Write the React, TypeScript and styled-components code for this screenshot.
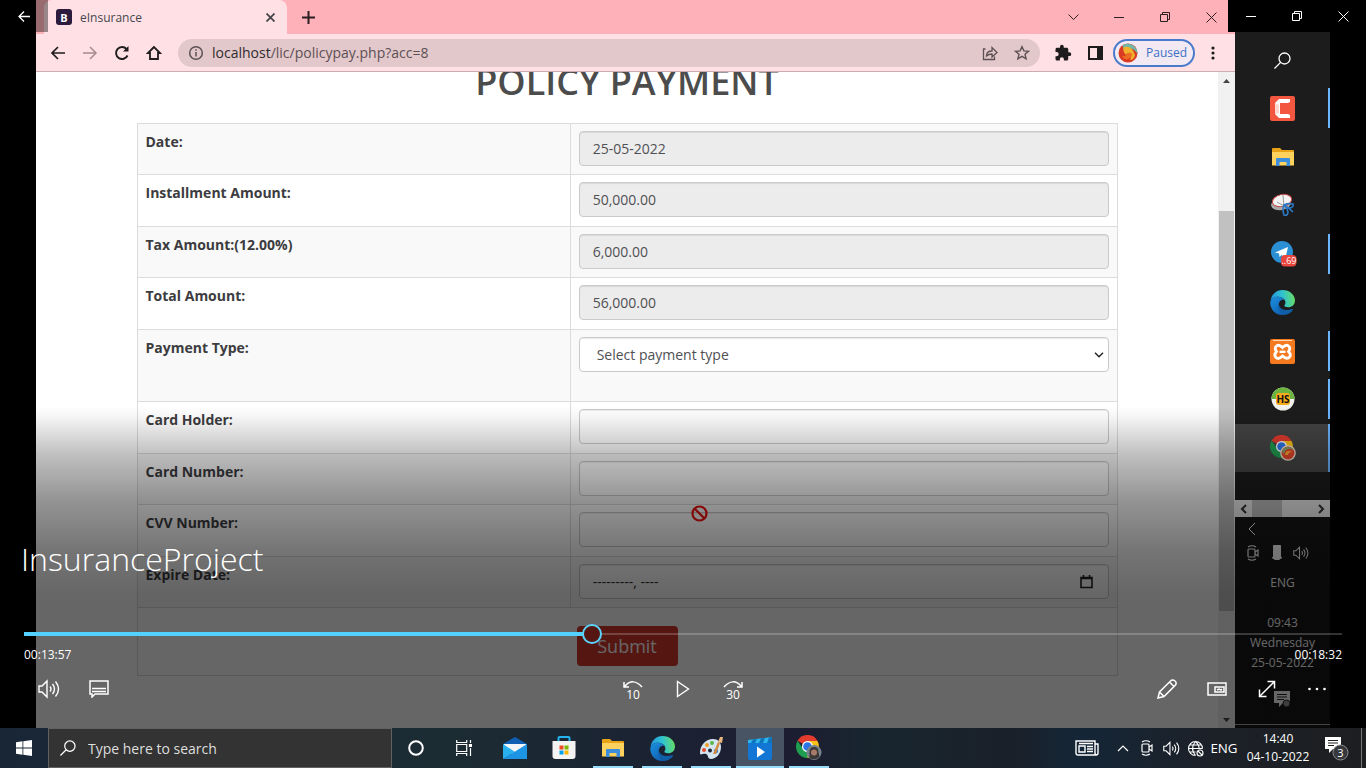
import React from "react";
import styled, { createGlobalStyle, css } from "styled-components";
import { MdExtension } from "react-icons/md";

const uiFont = `"Open Sans", "Noto Sans", sans-serif`;

const GlobalStyle = createGlobalStyle`
  * { box-sizing: border-box; }
  body { margin: 0; background: #000; font-family: ${uiFont}; }
  button, input, select { font-family: inherit; }
  button { border: 0; padding: 0; background: none; color: inherit; }
  svg { display: block; flex: none; }
`;

const Screen = styled.div`
  display: flex;
  flex-direction: column;
  min-height: 100vh;
  background: #000;
`;

const Player = styled.main`
  position: relative;
  flex: 1;
  display: flex;
  padding: 0 36px;
  overflow: hidden;
`;

/* ---------- recorded browser window ---------- */

const Browser = styled.section`
  flex: 1;
  min-width: 0;
  display: flex;
  flex-direction: column;
  background: #fff;
`;

const TabStrip = styled.div`
  display: flex;
  align-items: center;
  height: 34px;
  padding-right: 1px;
  background: #ffb1b9;
  color: #2c1f21;
`;

const Tab = styled.div`
  display: flex;
  align-items: center;
  gap: 8px;
  align-self: stretch;
  width: 243px;
  margin-left: 8px;
  padding: 0 12px;
  border-radius: 8px 8px 0 0;
  background: #ffe1e5;
  color: #45464c;
  font-size: 12px;
`;

const TabTitle = styled.span`
  flex: 1;
`;

const Favicon = styled.span`
  display: grid;
  place-items: center;
  width: 16px;
  height: 16px;
  border-radius: 3px;
  background: #2d1b3d;
  color: #fff;
  font-size: 11px;
  font-weight: 700;
`;

const NewTab = styled.button`
  margin-left: 15px;
`;

const WindowButtons = styled.div`
  display: flex;
  margin-left: auto;
`;

const WindowButton = styled.button`
  display: grid;
  place-items: center;
  width: 46px;
  height: 30px;
`;

const Toolbar = styled.div`
  display: flex;
  align-items: center;
  height: 38px;
  padding: 0 20px 0 14px;
  border-bottom: 1px solid #cbaeb1;
  background: #ffe1e5;
  color: #1d1b1c;
`;

const NavButtons = styled.div`
  display: flex;
  gap: 16px;
  margin-right: 16px;
`;

const AddressBar = styled.div`
  flex: 1;
  display: flex;
  align-items: center;
  gap: 8px;
  height: 28px;
  padding: 0 10px;
  border-radius: 14px;
  background: #e3c8cb;
  color: #5d5054;
`;

const AddressText = styled.span`
  flex: 1;
  font-size: 14px;

  b {
    color: #2f2b2e;
    font-weight: 400;
  }
`;

const AddressActions = styled.div`
  display: flex;
  gap: 16px;
`;

const Extensions = styled.div`
  display: flex;
  align-items: center;
  gap: 16px;
  margin-left: 14px;
`;

const ExtensionButtons = styled.div`
  display: flex;
  gap: 16px;
`;

const Profile = styled.button`
  display: flex;
  align-items: center;
  gap: 8px;
  width: 82px;
  height: 28px;
  margin-left: -6px;
  padding-left: 3px;
  border: 2px solid #4a7acb;
  border-radius: 14px;
  background: #f2e9f3;
  color: #3e70c4;
  font-size: 12px;
`;

const Viewport = styled.div`
  flex: 1;
  display: flex;
  overflow: hidden;
`;

const Page = styled.div`
  flex: 1;
  position: relative;
  padding: 0 24px;
`;

const Heading = styled.h1`
  margin: 0 0 31px;
  color: #4c4c4c;
  font-size: 36px;
  font-weight: 600;
  line-height: 20px;
  text-align: center;
`;

const PaymentTable = styled.table`
  width: 100%;
  max-width: 981px;
  margin: 0 auto;
  border-collapse: collapse;
  table-layout: fixed;
  border: 1px solid #dcdcdc;
  color: #3c3c40;
  font-size: 14px;
  line-height: 20px;

  tr:nth-child(odd) {
    background: #f9f9f9;
  }
`;

const LabelCol = styled.col`
  width: 44.2%;
`;

const LabelCell = styled.th`
  padding: 8px;
  border: 1px solid #dcdcdc;
  font-weight: 700;
  text-align: left;
  vertical-align: top;
`;

const FieldCell = styled.td<{ $bottom: number }>`
  position: relative;
  padding: 7px 8px ${(p) => p.$bottom}px;
  border: 1px solid #dcdcdc;
`;

const SubmitCell = styled.td`
  padding: 18px 8px 9px;
  text-align: center;
`;

const fieldStyle = css`
  display: block;
  width: 100%;
  height: 35px;
  border: 1px solid #cacaca;
  border-radius: 4px;
  background: #fff;
  box-shadow: inset 0 1px 1px rgba(0, 0, 0, 0.08);
  color: #505054;
  font-size: 14px;
`;

const Field = styled.input`
  ${fieldStyle}
  padding: 0 13px;

  &[readonly] {
    background: #ececec;
  }
  &::placeholder {
    color: #333;
    opacity: 1;
  }
`;

const Select = styled.select`
  ${fieldStyle}
  padding: 0 17px;
  appearance: none;
`;

const FieldIcon = styled.span<{ $right: number }>`
  position: absolute;
  top: 7px;
  right: ${(p) => p.$right}px;
  display: flex;
  align-items: center;
  height: 35px;
  color: #222;
  pointer-events: none;
`;

const BlockedCursor = styled.span`
  position: absolute;
  top: 0;
  left: 120px;
`;

const Submit = styled.button`
  width: 101px;
  height: 40px;
  border-radius: 4px;
  background: #d5382c;
  color: #fff;
  font-size: 18px;
`;

const Scrollbar = styled.div`
  display: flex;
  flex-direction: column;
  width: 17px;
  background: #f1f1f1;
  color: #454545;
`;

const ScrollArrow = styled.span`
  display: grid;
  place-items: center;
  height: 17px;
`;

const ScrollSpace = styled.span<{ $grow: number }>`
  flex: ${(p) => p.$grow};
`;

const ScrollThumb = styled.span`
  flex: 400;
  margin: 0 1px;
  background: #c1c1c1;
`;

/* ---------- recorded vertical taskbar ---------- */

const SideBar = styled.aside`
  display: flex;
  flex-direction: column;
  width: 95px;
  padding-top: 36px;
  background: #1c1c1c;
  color: #fff;
`;

const SideApp = styled.button<{ $bar?: boolean; $active?: boolean }>`
  display: grid;
  place-items: center;
  height: 48px;
  background: linear-gradient(#6cb5ff, #6cb5ff) right center / 2px
    ${(p) => (p.$active ? "48px" : p.$bar ? "40px" : "0")} no-repeat
    ${(p) => (p.$active ? "#444" : "transparent")};

  &:nth-child(odd):not(:first-child) {
    margin-top: 1px;
  }
`;

const SideScroll = styled.div`
  display: flex;
  align-items: center;
  justify-content: space-between;
  height: 17px;
  margin-top: 28px;
  padding: 0 5px;
  background: linear-gradient(#c1c1c1, #c1c1c1) 17px 0 / 30px 17px no-repeat #f1f1f1;
  color: #333;
`;

const SideTray = styled.div`
  display: flex;
  flex-direction: column;
  flex: 1;
  background: #171717;
  font-size: 12px;
  line-height: 20px;
  text-align: center;
`;

const SideTrayIcons = styled.div`
  display: flex;
  align-items: center;
  gap: 8px;
  height: 24px;
  padding-left: 10px;
`;

const SideLanguage = styled.span`
  margin: 8px 0 20px;
`;

const SideNotice = styled.span`
  display: flex;
  justify-content: center;
  margin-top: 18px;
  padding-bottom: 16px;
  border-bottom: 1px solid #aaa;
`;

/* ---------- video player overlay ---------- */

const TopBar = styled.header`
  position: absolute;
  top: 0;
  left: 0;
  right: 0;
  display: flex;
  justify-content: space-between;
  color: #fff;
`;

const BackButton = styled.button`
  display: grid;
  place-items: center;
  width: 48px;
  height: 32px;
  background: rgba(0, 0, 0, 0.4);
`;

const PlayerWindowButtons = styled.div`
  display: flex;
  background: #000;

  ${WindowButton} {
    height: 32px;
  }
`;

const Controls = styled.section`
  position: absolute;
  left: 0;
  right: 0;
  bottom: 0;
  display: flex;
  flex-direction: column;
  justify-content: flex-end;
  height: 328px;
  padding: 0 24px 15px;
  background: linear-gradient(
    rgba(0, 0, 0, 0) 6px,
    rgba(0, 0, 0, 0.04) 17px,
    rgba(0, 0, 0, 0.25) 55px,
    rgba(0, 0, 0, 0.42) 100px,
    rgba(0, 0, 0, 0.54) 150px,
    rgba(0, 0, 0, 0.6) 195px
  );
  color: #fff;
`;

const VideoTitle = styled.h2`
  margin: 0 0 43px -3px;
  font-size: 32px;
  font-weight: 300;
  line-height: 44px;
`;

const Seek = styled.input`
  --done: 43.1%;
  appearance: none;
  width: 100%;
  height: 20px;
  margin: 0 0 1px;
  background:
    linear-gradient(
        90deg,
        #53d1ff calc(var(--done) - 9px),
        transparent calc(var(--done) - 9px)
      )
      center / 100% 4px no-repeat,
    linear-gradient(
        90deg,
        transparent calc(var(--done) + 9px),
        rgba(255, 255, 255, 0.2) calc(var(--done) + 9px)
      )
      center / 100% 2px no-repeat;

  &::-webkit-slider-thumb {
    appearance: none;
    width: 20px;
    height: 20px;
    border: 2px solid #5bd2fb;
    border-radius: 50%;
    background: transparent;
  }
`;

const Times = styled.div`
  display: flex;
  justify-content: space-between;
  font-size: 12px;
  line-height: 20px;
`;

const ControlRow = styled.div`
  display: grid;
  grid-template-columns: 1fr auto 1fr;
  height: 48px;
`;

const ControlGroup = styled.div<{ $end?: boolean }>`
  display: flex;
  justify-content: ${(p) => (p.$end ? "flex-end" : "flex-start")};
`;

const ControlButton = styled.button`
  display: grid;
  place-items: center;
  width: 50px;
`;

const SkipButton = styled(ControlButton)`
  align-content: center;
  padding-top: 2px;
  font-size: 12px;
  line-height: 13px;
`;

/* ---------- desktop taskbar ---------- */

const TaskBar = styled.footer`
  display: flex;
  height: 40px;
  background: linear-gradient(
    90deg,
    #182636 0,
    #1c2c33 33%,
    #1b2433 46%,
    #1c1d31 58%,
    #18262f 64%,
    #1a2029 74%,
    #142637 79%,
    #1c2129 88%,
    #1d1e20 100%
  );
  color: #fff;
`;

const SearchBox = styled.label`
  display: flex;
  align-items: center;
  gap: 12px;
  width: 344px;
  padding-left: 11px;
  border: 1px solid #626262;
  background: #333;
`;

const SearchInput = styled.input`
  flex: 1;
  min-width: 0;
  padding: 0;
  border: 0;
  background: none;
  color: #fff;
  font-size: 14px;

  &::placeholder {
    color: #dedede;
    opacity: 1;
  }
`;

const TaskButton = styled.button<{ $line?: number; $active?: boolean }>`
  display: grid;
  place-items: center;
  width: 48px;
  background: linear-gradient(#97dcf8, #97dcf8) center bottom / ${(p) => p.$line ?? 0}px 2px
    no-repeat ${(p) => (p.$active ? "#485463" : "transparent")};
`;

const Apps = styled.div`
  display: flex;
  gap: 1px;
  margin-left: 3px;
`;

const Tray = styled.div`
  display: flex;
  align-items: center;
  margin-left: auto;
  font-size: 12px;
`;

const TrayButton = styled.button<{ $width: number }>`
  display: grid;
  place-items: center;
  width: ${(p) => p.$width}px;
  height: 40px;
`;

const Clock = styled.div`
  width: 74px;
  font-size: 12px;
  line-height: 18px;
  text-align: center;
`;

const ShowDesktop = styled.span`
  width: 5px;
  height: 40px;
  border-left: 1px solid #777;
`;

/* ---------- icons ---------- */

type LineProps = { w: number; h?: number; sw?: number; children: React.ReactNode };

const Line = ({ w, h = w, sw = 1, children }: LineProps) => (
  <svg width={w} height={h} viewBox={`0 0 ${w} ${h}`} fill="none" stroke="currentColor" strokeWidth={sw} aria-hidden="true">
    {children}
  </svg>
);

const MinimizeIcon = () => <Line w={10}><path d="M0 5.5h10" /></Line>;
const RestoreIcon = () => <Line w={10}><path d="M.5 2.5h7v7h-7zM2.500 2.500v-2h7v7h-2" /></Line>;
const CloseIcon = ({ size = 11, sw = 1 }) => (
  <Line w={size} sw={sw}><path d={`M.5 .5L${size - 0.5} ${size - 0.5}M${size - 0.5} .5L.5 ${size - 0.5}`} /></Line>
);

const SearchIcon = ({ size = 17 }) => (
  <svg width={size} height={size} viewBox="0 0 17 17" fill="none" stroke="currentColor" strokeWidth="1.3" aria-hidden="true">
    <circle cx="10.500" cy="6.500" r="5.500" />
    <path d="M6.600 10.400L.5 16.500" />
  </svg>
);

const SpeakerIcon = ({ w = 22 }) => (
  <svg width={w} height={w} viewBox="0 0 22 22" fill="none" stroke="currentColor" strokeWidth="1.400" aria-hidden="true">
    <path d="M1 8h3l5-5v16l-5-5H1zM12 8.500q2 2.500 0 5M14.500 6q4 5 0 10M17.500 3.500q6 7.500 0 15" />
  </svg>
);

const CameraIcon = ({ size = 16 }) => (
  <svg width={size} height={size} viewBox="0 0 16 16" fill="none" stroke="currentColor" strokeWidth="1.200" aria-hidden="true">
    <rect x="3" y="4" width="7" height="8" rx="1" />
    <path d="M10 7l3-2v6l-3-2M3 2q4-2.500 8 0M3 14q4 2.500 8 0" />
  </svg>
);

const NoticeIcon = () => (
  <svg width="17" height="17" viewBox="0 0 17 17" aria-hidden="true">
    <path d="M0 0h16v12H9l-4 4v-4H0z" fill="currentColor" />
    <path d="M3 3.500h10M3 6h10M3 8.500h7" stroke="#222" />
    <circle cx="12.500" cy="12.500" r="3.500" fill="#999" stroke="#222" />
  </svg>
);

const FolderIcon = () => (
  <svg width="22" height="18" viewBox="0 0 22 18" aria-hidden="true">
    <path d="M0 1q0-1 1-1h7l2 2h11q1 0 1 1v5H0z" fill="#e8a317" />
    <path d="M0 4h22v13.500H0z" fill="#ffd25e" />
    <path d="M4 18v-7q0-1 1-1h12q1 0 1 1v7h-3.500v-4h-7v4z" fill="#3a8edc" />
  </svg>
);

const EdgeIcon = ({ size = 25, id }: { size?: number; id: string }) => (
  <svg width={size} height={size} viewBox="0 0 24 24" aria-hidden="true">
    <defs>
      <linearGradient id={`${id}-top`} x1="0" y1=".4" x2="1" y2=".3">
        <stop offset="0" stopColor="#2193df" />
        <stop offset=".5" stopColor="#31c3d0" />
        <stop offset="1" stopColor="#67dc62" />
      </linearGradient>
      <linearGradient id={`${id}-low`} x1="0" y1="0" x2="1" y2="1">
        <stop offset="0" stopColor="#1c92e0" />
        <stop offset="1" stopColor="#0c4ca0" />
      </linearGradient>
    </defs>
    <path d="M.5 11C1 4.500 6 0 12 0c7 0 12 4.700 12 10 0 4-3 6.500-6.500 6.500-2.500 0-4-.8-3.700-1.600.5-.8 1-1.500 1-2.800C14.800 8.500 11 6.500 7 6.500 4 6.500 1.500 8.500.5 11z" fill={`url(#${id}-top)`} />
    <path d="M.3 11.500C1.300 8.200 4 6.500 7.500 6.500c3 0 5.200 1.300 6.300 3-3.500-.6-6 2-5.200 5.500.9 3.900 5.500 6.200 13.400 3.500C19.600 22 16 24 12 24 5 24-.2 18 .3 11.500z" fill={`url(#${id}-low)`} />
    <path d="M8.700 12.500c-1 4.500 4 8.500 12.800 5.800.5-.2.900.3.500.8-2 2.700-4.500 4.200-7.500 4.700-5-1-8.300-6.500-5.800-11.300z" fill="#115ea8" />
  </svg>
);

const ChromeIcon = ({ badge }: { badge: "firefox" | "avatar" }) => (
  <svg width="26" height="26" viewBox="0 0 26 26" aria-hidden="true">
    <path d="M11.500 11.500L1.500 5.800A11.500 11.500 0 0 1 21.500 5.800z" fill="#e33b2e" />
    <path d="M11.500 11.500h-6L1.500 5.800A11.500 11.500 0 0 0 11.500 23l5-8.500z" fill="#1f9d50" />
    <path d="M11.500 11.500V6h10A11.500 11.500 0 0 1 11.500 23z" fill="#fbc116" />
    <circle cx="11.500" cy="11.500" r="5.500" fill="#fff" />
    <circle cx="11.500" cy="11.500" r="4.300" fill="#2e74e4" />
    {badge === "firefox" ? (
      <>
        <circle cx="18" cy="18" r="7.800" fill="#eadfcd" />
        <circle cx="18" cy="18" r="6.500" fill="#e0452a" />
        <path d="M12 16a6.500 6.500 0 0 1 12 0q-3-3-6-2-4 1-3.500 5Q12 18 12 16z" fill="#7fa06a" />
        <path d="M15 20q1-6 7-3-4 0-4 3z" fill="#f5a52b" />
      </>
    ) : (
      <>
        <circle cx="18" cy="17.500" r="7.500" fill="#77828c" />
        <path d="M13.500 17q0-5 4.500-5t4.500 5l1 5q-5 4-10 1z" fill="#3c3837" />
        <circle cx="18" cy="17.500" r="3" fill="#a77b6a" />
      </>
    )}
  </svg>
);

const FirefoxIcon = () => (
  <svg width="20" height="20" viewBox="0 0 20 20" aria-hidden="true">
    <circle cx="10" cy="10" r="9.500" fill="#d93a21" />
    <path d="M5 2q6-3 11 1 4 4 3.500 8Q16 5 11 6T9 11Q4 6 5 2z" fill="#6fb5a8" />
    <path d="M6 4q8-2 11 8-1 5-5 5 2-4 0-6-3-2-4 1-4-4-2-8z" fill="#f0b02c" />
    <path d="M9 11q3-3 5 0 0 4-4 5t-6-3q3 1 5-2z" fill="#ee6a22" />
  </svg>
);

const CamtasiaIcon = () => (
  <svg width="25" height="25" viewBox="0 0 25 25" aria-hidden="true">
    <rect width="25" height="25" rx="2" fill="#f4573f" />
    <path d="M20 3H9L5 7v11l4 4h11v-3l-2-1h-8V7h8l2-1z" fill="#fff" />
    <path d="M5 7l4 2v8l-4 1z" fill="#ffd6ce" />
  </svg>
);

const SnipIcon = () => (
  <svg width="24" height="24" viewBox="0 0 24 24" fill="none" aria-hidden="true">
    <ellipse cx="10" cy="11" rx="10" ry="6" fill="#a9a9a9" transform="rotate(-10 10 11)" />
    <ellipse cx="11" cy="7.500" rx="9.800" ry="6" fill="#f3f3f3" stroke="#c44545" transform="rotate(-12 11 7.500)" />
    <path d="M12 2l1 12M6 9l7 4" stroke="#9a9a9a" />
    <path d="M13 12q4-2 9-1 1 3-3 4-4 0-6-3zM13 12q-2 4 0 10 4 1 4-3-1-4-4-7zM13 12q5 3 9 7" stroke="#2a79c6" strokeWidth="1.600" />
  </svg>
);

const TelegramIcon = () => (
  <svg width="28" height="26" viewBox="0 0 28 26" aria-hidden="true">
    <circle cx="13" cy="11" r="11" fill="#2b8fd3" />
    <path d="M6 11.500L19 6l-2.500 11-4-3-2 2-.5-3.500z" fill="#fff" />
    <rect x="12" y="14" width="15.500" height="11.500" rx="4" fill="#e8453c" />
    <text x="20" y="23" fontSize="9" fill="#fff" textAnchor="middle">..69</text>
  </svg>
);

const XamppIcon = () => (
  <svg width="25" height="25" viewBox="0 0 25 25" fill="none" aria-hidden="true">
    <rect width="25" height="25" rx="2" fill="#f4791f" />
    <path d="M3 1.500h19" stroke="#ffd8b5" />
    <path d="M12.500 8.500Q9 5 6.500 7T6.500 12.500Q3.500 16 6 18.500T12.500 17Q16 20.500 19 18.500T18.500 12.500Q21 9 18.500 7T12.500 8.500z" stroke="#fff" strokeWidth="2.800" />
    <path d="M9.500 12.800h6" stroke="#fff" strokeWidth="2.400" />
  </svg>
);

const HeidiIcon = () => (
  <svg width="24" height="24" viewBox="0 0 24 24" aria-hidden="true">
    <circle cx="12" cy="12" r="11.500" fill="#f1f1ee" />
    <path d="M.5 12a11.500 11.500 0 0 1 23 0z" fill="#6db33f" />
    <rect x="5" y="6" width="14" height="12" rx="3" fill="#f8ab1c" />
    <text x="12" y="16" fontSize="10" fontWeight="700" fill="#111" textAnchor="middle">HS</text>
  </svg>
);

const MailIcon = () => (
  <svg width="24" height="22" viewBox="0 0 24 22" aria-hidden="true">
    <path d="M0 7L12 0l12 7v2H0z" fill="#0f5fb4" />
    <path d="M1 7h22v10H1z" fill="#f3f6f8" />
    <path d="M0 7l12 8L0 22z" fill="#28b1ee" />
    <path d="M24 7L0 22h24z" fill="#1d93e3" />
    <path d="M2 7h20l-10 7z" fill="#f3f6f8" />
  </svg>
);

const StoreIcon = () => (
  <svg width="24" height="24" viewBox="0 0 24 24" aria-hidden="true">
    <path d="M6.500 6V2q0-1 1-1h9q1 0 1 1v4" fill="none" stroke="#23b4ef" strokeWidth="2" />
    <path d="M.5 5h23v15q0 3-3 3h-17q-3 0-3-3z" fill="#f3f3f3" />
    <path d="M7.500 9.500h4v4h-4z" fill="#ef4b23" />
    <path d="M12.500 9.500h4v4h-4z" fill="#7cb900" />
    <path d="M7.500 14.500h4v4h-4z" fill="#049fe9" />
    <path d="M12.500 14.500h4v4h-4z" fill="#fcb400" />
  </svg>
);

const PaintIcon = () => (
  <svg width="25" height="24" viewBox="0 0 25 24" aria-hidden="true">
    <path d="M1 17C1 9 7 3 14 3c5 0 8 3 8 8 0 7-5 12-10 12-4 0-2-4-5-5-3-.8-6 2-6-1z" fill="#d5e5ef" />
    <circle cx="5" cy="14" r="2" fill="#e74b2f" />
    <circle cx="8" cy="9" r="2" fill="#f19c26" />
    <circle cx="13" cy="7" r="2" fill="#5ab54a" />
    <circle cx="17" cy="15" r="2.200" fill="#2f7dd2" />
    <circle cx="11" cy="14.500" r="2" fill="#20263a" />
    <path d="M14 18l5-12 2 1-4 11z" fill="#d58b3d" />
    <path d="M19 6l2-5 3 0-1 6z" fill="#e7b57e" />
  </svg>
);

const MoviesIcon = () => (
  <svg width="24" height="23" viewBox="0 0 24 23" aria-hidden="true">
    <path d="M0 3L24 0v6H0z" fill="#2eb5ec" />
    <path d="M5 2.400l4-.5-2 4H3zM13 1.400l4-.5-2 5h-4zM21 .4l3-.4v6h-5z" fill="#0e75bd" />
    <path d="M0 6h24v15q0 2-2 2H2q-2 0-2-2z" fill="#1277d4" />
    <path d="M9 9.500v11l8-5.500z" fill="#fff" />
  </svg>
);

const sideApps = [
  { name: "Search", icon: <SearchIcon size={17} /> },
  { name: "Camtasia", icon: <CamtasiaIcon />, bar: true },
  { name: "File Explorer", icon: <FolderIcon /> },
  { name: "Snipping Tool", icon: <SnipIcon /> },
  { name: "Telegram", icon: <TelegramIcon />, bar: true },
  { name: "Edge", icon: <EdgeIcon id="side-edge" /> },
  { name: "XAMPP", icon: <XamppIcon />, bar: true },
  { name: "HeidiSQL", icon: <HeidiIcon />, bar: true },
  { name: "Chrome", icon: <ChromeIcon badge="firefox" />, active: true },
];

const taskApps = [
  { name: "Mail", icon: <MailIcon /> },
  { name: "Store", icon: <StoreIcon /> },
  { name: "File Explorer", icon: <FolderIcon />, line: 40 },
  { name: "Edge", icon: <EdgeIcon id="task-edge" />, line: 40 },
  { name: "Paint", icon: <PaintIcon />, line: 40 },
  { name: "Movies & TV", icon: <MoviesIcon />, line: 48, active: true },
  { name: "Chrome", icon: <ChromeIcon badge="avatar" />, line: 40 },
];

type Row = { id: string; label: string; value?: string; kind?: "select" | "month" | "blocked" };

const rows: Row[] = [
  { id: "date", label: "Date:", value: "25-05-2022" },
  { id: "installment", label: "Installment Amount:", value: "50,000.00" },
  { id: "tax", label: "Tax Amount:(12.00%)", value: "6,000.00" },
  { id: "total", label: "Total Amount:", value: "56,000.00" },
  { id: "type", label: "Payment Type:", kind: "select" },
  { id: "holder", label: "Card Holder:" },
  { id: "number", label: "Card Number:" },
  { id: "cvv", label: "CVV Number:", kind: "blocked" },
  { id: "expire", label: "Expire Date:", kind: "month" },
];

const PaymentRow = ({ row, index }: { row: Row; index: number }) => (
  <tr>
    <LabelCell scope="row"><label htmlFor={row.id}>{row.label}</label></LabelCell>
    <FieldCell $bottom={row.kind === "select" ? 29 : index % 2 ? 9 : 8}>
      {row.kind === "select" ? (
        <>
          <Select id={row.id}><option>Select payment type</option></Select>
          <FieldIcon $right={13}><Line w={10} h={6} sw={1.4}><path d="M1 .8l4 4 4-4" /></Line></FieldIcon>
        </>
      ) : (
        <Field
          id={row.id}
          defaultValue={row.value}
          readOnly={row.value !== undefined}
          placeholder={row.kind === "month" ? "---------, ----" : undefined}
        />
      )}
      {row.kind === "month" && (
        <FieldIcon $right={24}>
          <Line w={13} h={14} sw={1.6}><path d="M1 2.500h11v10H1zM1 3.500h11M3.500 0v3M9.500 0v3" /></Line>
        </FieldIcon>
      )}
      {row.kind === "blocked" && (
        <BlockedCursor>
          <svg width="17" height="17" viewBox="0 0 17 17" fill="none" stroke="#f00f0f" strokeWidth="2.200" aria-hidden="true">
            <circle cx="8.500" cy="8.500" r="7" /><path d="M3.500 3.500l10 10" />
          </svg>
        </BlockedCursor>
      )}
    </FieldCell>
  </tr>
);

const ForwardButton = styled.button`
  color: #a58c90;
`;

const BrowserWindow = () => (
  <Browser>
    <TabStrip>
      <Tab>
        <Favicon>B</Favicon>
        <TabTitle>eInsurance</TabTitle>
        <button aria-label="Close tab"><CloseIcon size={9} sw={1.8} /></button>
      </Tab>
      <NewTab aria-label="New tab"><Line w={13} sw={2}><path d="M6.500 0v13M0 6.500h13" /></Line></NewTab>
      <WindowButtons>
        <WindowButton aria-label="Search tabs"><Line w={11} h={6}><path d="M.5 .5l5 5 5-5" /></Line></WindowButton>
        <WindowButton aria-label="Minimize"><MinimizeIcon /></WindowButton>
        <WindowButton aria-label="Restore"><RestoreIcon /></WindowButton>
        <WindowButton aria-label="Close"><CloseIcon /></WindowButton>
      </WindowButtons>
    </TabStrip>
    <Toolbar>
      <NavButtons>
        <button aria-label="Back"><Line w={16} sw={1.7}><path d="M15 8H2M8 2L2 8l6 6" /></Line></button>
        <ForwardButton aria-label="Forward"><Line w={16} sw={1.5}><path d="M1 8h13M8 2l6 6-6 6" /></Line></ForwardButton>
        <button aria-label="Reload"><Line w={16} sw={1.9}><path d="M13.500 10.500A6 6 0 1 1 12.500 4" /><path d="M14.500 1v5.500H9z" fill="currentColor" stroke="none" /></Line></button>
        <button aria-label="Home"><Line w={16} sw={1.8}><path d="M8 2L2 8h2v6h8V8h2z" /></Line></button>
      </NavButtons>
      <AddressBar>
        <Line w={16} sw={1.5}><circle cx="8" cy="8" r="6.300" /><path d="M8 7v4.500M8 4.300v1.500" /></Line>
        <AddressText><b>localhost</b>/lic/policypay.php?acc=8</AddressText>
        <AddressActions>
          <button aria-label="Share"><Line w={16} sw={1.3}><path d="M3.500 4H1.500v10.500h11v-3M4.500 11q0-5 5.500-5V2.500L15 7.500l-5 4.500V9q-3.500 0-5.500 2z" /></Line></button>
          <button aria-label="Bookmark"><Line w={16} sw={1.4}><path d="M8 1.700l1.900 4.200 4.600.4-3.500 3 1.100 4.500L8 11.400l-4.100 2.400L5 9.300 1.500 6.300l4.600-.4z" /></Line></button>
        </AddressActions>
      </AddressBar>
      <Extensions>
        <ExtensionButtons>
          <button aria-label="Extensions"><MdExtension size={18} /></button>
          <button aria-label="Side panel">
            <svg width="15" height="16" viewBox="0 0 15 16" aria-hidden="true"><path d="M0 1h15v14H0zM2 3v10h7V3z" fill="currentColor" fillRule="evenodd" /></svg>
          </button>
        </ExtensionButtons>
        <Profile><FirefoxIcon />Paused</Profile>
        <button aria-label="Menu"><svg width="4" height="14" viewBox="0 0 4 14" fill="currentColor" aria-hidden="true"><circle cx="2" cy="2" r="1.600" /><circle cx="2" cy="7" r="1.600" /><circle cx="2" cy="12" r="1.600" /></svg></button>
      </Extensions>
    </Toolbar>
    <Viewport>
      <Page>
        <Heading>POLICY PAYMENT</Heading>
        <PaymentTable>
          <colgroup><LabelCol /><col /></colgroup>
          <tbody>
            {rows.map((row, i) => <PaymentRow key={row.id} row={row} index={i} />)}
            <tr><SubmitCell colSpan={2}><Submit>Submit</Submit></SubmitCell></tr>
          </tbody>
        </PaymentTable>
      </Page>
      <Scrollbar>
        <ScrollArrow><svg width="7" height="4" viewBox="0 0 7 4" fill="currentColor"><path d="M0 4l3.500-4L7 4z" /></svg></ScrollArrow>
        <ScrollSpace $grow={122} />
        <ScrollThumb />
        <ScrollSpace $grow={100} />
        <ScrollArrow><svg width="7" height="4" viewBox="0 0 7 4" fill="currentColor"><path d="M0 0l3.500 4L7 0z" /></svg></ScrollArrow>
      </Scrollbar>
    </Viewport>
  </Browser>
);

const RecordedTaskbar = () => (
  <SideBar>
    {sideApps.map((app) => (
      <SideApp key={app.name} aria-label={app.name} $bar={app.bar} $active={app.active}>{app.icon}</SideApp>
    ))}
    <SideScroll>
      <Line w={8} h={10} sw={2}><path d="M6 1L2 5l4 4" /></Line>
      <Line w={8} h={10} sw={2}><path d="M2 1l4 4-4 4" /></Line>
    </SideScroll>
    <SideTray>
      <SideTrayIcons><Line w={14} h={14}><path d="M10 1L4 7l6 6" /></Line></SideTrayIcons>
      <SideTrayIcons>
        <CameraIcon />
        <svg width="16" height="18" viewBox="0 0 16 18" fill="currentColor" aria-hidden="true"><rect x="4" y="1" width="8" height="13" rx="1" /><path d="M3 13h10v1l-3 2H6l-3-2z" /></svg>
        <SpeakerIcon w={16} />
      </SideTrayIcons>
      <SideLanguage>ENG</SideLanguage>
      <span>09:43</span>
      <span>Wednesday</span>
      <span>25-05-2022</span>
      <SideNotice><NoticeIcon /></SideNotice>
    </SideTray>
  </SideBar>
);

const PlayerControls = () => (
  <Controls>
    <VideoTitle>InsuranceProject</VideoTitle>
    <Seek type="range" aria-label="Seek" min={0} max={1000} defaultValue={430} />
    <Times><span>00:13:57</span><span>00:18:32</span></Times>
    <ControlRow>
      <ControlGroup>
        <ControlButton aria-label="Volume"><SpeakerIcon /></ControlButton>
        <ControlButton aria-label="Subtitles"><Line w={20} h={18} sw={1.5}><path d="M1 1h18v13H6l-3 3v-3H1zM3 8.500h14M3 11.500h14" /></Line></ControlButton>
      </ControlGroup>
      <ControlGroup>
        <SkipButton aria-label="Back 10 seconds"><Line w={20} h={8} sw={1.5}><path d="M1 2v5h5M1.500 6.500Q10-3 19 7" /></Line>10</SkipButton>
        <ControlButton aria-label="Play"><Line w={14} h={18} sw={1.4}><path d="M1.500 1.500v15L12.500 9z" /></Line></ControlButton>
        <SkipButton aria-label="Forward 30 seconds"><Line w={20} h={8} sw={1.5}><path d="M19 2v5h-5M18.500 6.500Q10-3 1 7" /></Line>30</SkipButton>
      </ControlGroup>
      <ControlGroup $end>
        <ControlButton aria-label="Edit"><Line w={20} sw={1.5}><path d="M1 19l1.500-6L14 1.500q2-1 4 .5t.5 4L7 17.500zM12.500 3l4.500 4.500M2.500 13L7 17.500" /></Line></ControlButton>
        <ControlButton aria-label="Mini view"><Line w={20} h={14} sw={1.5}><path d="M1 1h18v12H1zM8 5h9v5H8zM10 8l2-1 2 1 1-1" /></Line></ControlButton>
        <ControlButton aria-label="Full screen"><Line w={18} sw={1.5}><path d="M1.500 16.500l15-15M9.500 1.500h7v7M1.500 9.500v7h7" /></Line></ControlButton>
        <ControlButton aria-label="More"><svg width="18" height="4" viewBox="0 0 18 4" fill="currentColor" aria-hidden="true"><circle cx="1.500" cy="2" r="1.300" /><circle cx="9" cy="2" r="1.300" /><circle cx="16.500" cy="2" r="1.300" /></svg></ControlButton>
      </ControlGroup>
    </ControlRow>
  </Controls>
);

const DesktopTaskbar = () => (
  <TaskBar>
    <TaskButton aria-label="Start">
      <svg width="16" height="16" viewBox="0 0 16 16" fill="#fff" aria-hidden="true"><path d="M0 2.200L6.500 1.300v6.200H0zM7.300 1.200L16 0v7.500H7.300zM0 8.400h6.500v6.300L0 13.800zM7.300 8.400H16V16l-8.700-1.200z" /></svg>
    </TaskButton>
    <SearchBox>
      <SearchIcon size={16} />
      <SearchInput aria-label="Search" placeholder="Type here to search" />
    </SearchBox>
    <TaskButton aria-label="Cortana"><Line w={16} sw={2}><circle cx="8" cy="8" r="6.800" /></Line></TaskButton>
    <TaskButton aria-label="Task view"><Line w={16} sw={1.2}><path d="M.7 0v2.500h10V0M.7 4.500h10v7H.7zM.7 16v-2.500h10V16M14.500 0v3M14.500 8v8" /><path d="M13.500 4.500h2v2h-2z" fill="currentColor" /></Line></TaskButton>
    <Apps>
      {taskApps.map((app) => (
        <TaskButton key={app.name} aria-label={app.name} $line={app.line} $active={app.active}>{app.icon}</TaskButton>
      ))}
    </Apps>
    <Tray>
      <TrayButton $width={48} aria-label="News"><Line w={24} h={16} sw={1.4}><path d="M1 1h19v12q0 2 2 2H3q-2 0-2-2zM20 4h3v9q0 2-2 2M4 6h6v6H4zM12 6.500h6M12 9h6M12 11.500h6M4 3.500h14" /></Line></TrayButton>
      <TrayButton $width={24} aria-label="Hidden icons"><Line w={12} h={7} sw={1.2}><path d="M1 6l5-5 5 5" /></Line></TrayButton>
      <TrayButton $width={24} aria-label="Meet now"><CameraIcon /></TrayButton>
      <TrayButton $width={24} aria-label="Volume"><SpeakerIcon w={17} /></TrayButton>
      <TrayButton $width={24} aria-label="Network"><Line w={17} sw={1.1}><path d="M8.500 15.500a7 7 0 1 1 7-7M8.500 15.500q-6-7 0-14 4 4 3.500 7M1.500 8.500h14M2.500 5h12M2.500 12h6" /><circle cx="13" cy="13" r="3" /><path d="M11 11l4 4" /></Line></TrayButton>
      <TrayButton $width={34} aria-label="Language">ENG</TrayButton>
      <Clock>14:40<br />04-10-2022</Clock>
      <TrayButton $width={46} aria-label="Notifications">
        <svg width="26" height="26" viewBox="0 0 26 26" aria-hidden="true">
          <path d="M0 2h16v12H8l-4 4v-4H0z" fill="#fff" />
          <path d="M3 5.500h10M3 8h10M3 10.500h6" stroke="#222" />
          <circle cx="15.500" cy="17.500" r="7.500" fill="#36383b" stroke="#8c8c8c" />
          <text x="15.500" y="21.500" fontSize="11" fill="#fff" textAnchor="middle">3</text>
        </svg>
      </TrayButton>
      <ShowDesktop />
    </Tray>
  </TaskBar>
);

export default function App() {
  return (
    <Screen>
      <GlobalStyle />
      <Player>
        <BrowserWindow />
        <RecordedTaskbar />
        <PlayerControls />
        <TopBar>
          <BackButton aria-label="Back"><Line w={12} h={11} sw={1.3}><path d="M12 5.500H1M6 .5l-5 5 5 5" /></Line></BackButton>
          <PlayerWindowButtons>
            <WindowButton aria-label="Minimize"><MinimizeIcon /></WindowButton>
            <WindowButton aria-label="Restore"><RestoreIcon /></WindowButton>
            <WindowButton aria-label="Close"><CloseIcon /></WindowButton>
          </PlayerWindowButtons>
        </TopBar>
      </Player>
      <DesktopTaskbar />
    </Screen>
  );
}
